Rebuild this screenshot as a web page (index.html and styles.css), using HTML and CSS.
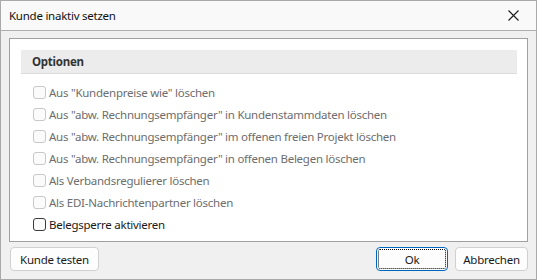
FILE: index.html
```html
<!DOCTYPE html>
<html lang="de">
<head>
    <meta charset="UTF-8">
    <title>Kunde inaktiv setzen</title>
    <link rel="stylesheet" href="styles.css">
</head>
<body>
    <div class="dialog">
        <div class="titlebar">
            <span class="title">Kunde inaktiv setzen</span>
            <span class="close">
                <svg width="11" height="11" viewBox="0 0 11 11">
                    <path d="M0.5 0.5 L10.5 10.5 M10.5 0.5 L0.5 10.5" stroke="#1a1a1a" stroke-width="1.1" fill="none"/>
                </svg>
            </span>
        </div>

        <div class="content">
            <div class="panel">
                <div class="section-head">Optionen</div>
                <div class="options">
                    <label class="option disabled"><input type="checkbox" disabled> Aus "Kundenpreise wie" löschen</label>
                    <label class="option disabled"><input type="checkbox" disabled> Aus "abw. Rechnungsempfänger" in Kundenstammdaten löschen</label>
                    <label class="option disabled"><input type="checkbox" disabled> Aus "abw. Rechnungsempfänger" im offenen freien Projekt löschen</label>
                    <label class="option disabled"><input type="checkbox" disabled> Aus "abw. Rechnungsempfänger" in offenen Belegen löschen</label>
                    <label class="option disabled"><input type="checkbox" disabled> Als Verbandsregulierer löschen</label>
                    <label class="option disabled"><input type="checkbox" disabled> Als EDI-Nachrichtenpartner löschen</label>
                    <label class="option"><input type="checkbox"> Belegsperre aktivieren</label>
                </div>
            </div>

            <div class="buttons">
                <button class="btn btn-test">Kunde testen</button>
                <div class="spacer"></div>
                <button class="btn btn-default"><span class="focus">Ok</span></button>
                <button class="btn">Abbrechen</button>
            </div>
        </div>
    </div>
</body>
</html>
```

FILE: styles.css
```css
body {
    margin: 0;
    background-color: #fff;
    font-family: 'Noto Sans', 'Open Sans', sans-serif;
    font-size: 11.5px;
    letter-spacing: -0.25px;
    color: #1a1a1a;
}
.dialog {
    width: 537px;
    height: 280px;
    box-sizing: border-box;
    border: 1px solid #a9a9a9;
    background-color: #f0f0f0;
    display: flex;
    flex-direction: column;
}
.titlebar {
    height: 29px;
    background-color: #f9f9f9;
    border-bottom: 1px solid #adadad;
    display: flex;
    align-items: center;
    justify-content: space-between;
    padding: 0 17px 0 8px;
}
.title {
    font-size: 11.5px;
    color: #111;
}
.close {
    display: flex;
}
.content {
    padding: 7px 8px 0 8px;
    display: flex;
    flex-direction: column;
}
.panel {
    height: 204px;
    box-sizing: border-box;
    background-color: #fff;
    border: 1px solid #a0a0a0;
    padding: 11px 10px 0 11px;
}
.section-head {
    height: 23px;
    line-height: 23px;
    background-color: #ececec;
    border-bottom: 1px solid #dcdcdc;
    padding-left: 11px;
    font-weight: bold;
    color: #333;
}
.options {
    padding: 7px 0 0 12px;
}
.option {
    display: flex;
    align-items: center;
    height: 22px;
    color: #1a1a1a;
}
.option.disabled {
    color: #6d6d6d;
}
.option input {
    appearance: none;
    width: 13px;
    height: 13px;
    margin: 0 3px 0 0;
    box-sizing: border-box;
    border: 1px solid #3a3a3a;
    border-radius: 3px;
    background-color: #fbfbfb;
}
.option input:disabled {
    border-color: #c8c8c8;
}
.buttons {
    display: flex;
    margin-top: 5px;
    gap: 7px;
}
.spacer {
    flex: 1;
}
.btn {
    height: 24px;
    box-sizing: border-box;
    border: 1px solid #d0d0d0;
    border-radius: 4px;
    background-color: #fdfdfd;
    font-family: inherit;
    font-size: 11.5px;
    letter-spacing: -0.25px;
    color: #1a1a1a;
    padding: 0;
    width: 73px;
}
.btn-test {
    width: 89px;
    margin-left: 1px;
}
.btn-default {
    width: 72px;
    border: 1px solid #0067c0;
    padding: 1px;
}
.btn-default .focus {
    display: flex;
    align-items: center;
    justify-content: center;
    height: 100%;
    box-sizing: border-box;
    border: 1px dotted #000;
    border-radius: 2px;
}
```
